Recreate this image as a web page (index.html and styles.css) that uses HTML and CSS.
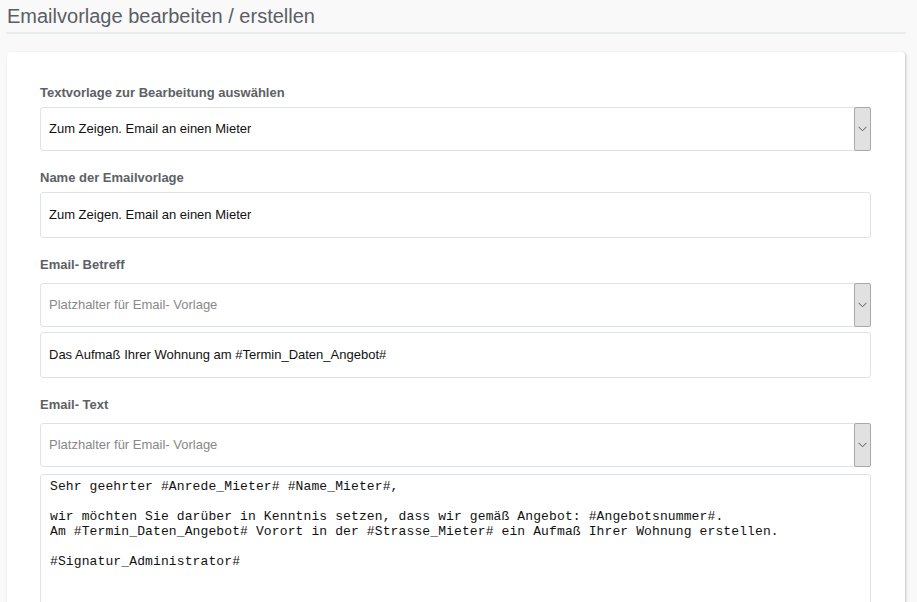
FILE: index.html
```html
<!DOCTYPE html>
<html lang="de">
<head>
<meta charset="utf-8">
<title>Emailvorlage bearbeiten / erstellen</title>
<link rel="stylesheet" href="styles.css">
</head>
<body>
<header class="page-head">
  <h1 class="page-title">Emailvorlage bearbeiten / erstellen</h1>
</header>
<main class="card">
  <label class="lbl">Textvorlage zur Bearbeitung auswählen</label>
  <div class="select">
    <span class="select-text">Zum Zeigen. Email an einen Mieter</span>
    <span class="select-btn"><svg width="9" height="6" viewBox="0 0 9 6"><polyline points="0.5,0.8 4.5,4.8 8.5,0.8" fill="none" stroke="#555" stroke-width="1"/></svg></span>
  </div>

  <label class="lbl lbl-gap">Name der Emailvorlage</label>
  <div class="input">Zum Zeigen. Email an einen Mieter</div>

  <label class="lbl lbl-gap lbl-wide">Email- Betreff</label>
  <div class="select">
    <span class="select-text placeholder">Platzhalter für Email- Vorlage</span>
    <span class="select-btn"><svg width="9" height="6" viewBox="0 0 9 6"><polyline points="0.5,0.8 4.5,4.8 8.5,0.8" fill="none" stroke="#555" stroke-width="1"/></svg></span>
  </div>
  <div class="input input-follow">Das Aufmaß Ihrer Wohnung am #Termin_Daten_Angebot#</div>

  <label class="lbl lbl-gap lbl-wide">Email- Text</label>
  <div class="select">
    <span class="select-text placeholder">Platzhalter für Email- Vorlage</span>
    <span class="select-btn"><svg width="9" height="6" viewBox="0 0 9 6"><polyline points="0.5,0.8 4.5,4.8 8.5,0.8" fill="none" stroke="#555" stroke-width="1"/></svg></span>
  </div>
  <div class="textarea">Sehr geehrter #Anrede_Mieter# #Name_Mieter#,

wir möchten Sie darüber in Kenntnis setzen, dass wir gemäß Angebot: #Angebotsnummer#.
Am #Termin_Daten_Angebot# Vorort in der #Strasse_Mieter# ein Aufmaß Ihrer Wohnung erstellen.

#Signatur_Administrator#</div>
</main>
</body>
</html>
```
FILE: styles.css
```css
html, body {
  margin: 0;
  padding: 0;
}
body {
  background: #f9f9f9;
  font-family: "Liberation Sans", Arial, sans-serif;
  overflow: hidden;
  height: 602px;
}
.page-head {
  margin: 0 11px 0 6px;
  border-bottom: 2px solid #e8ecec;
  height: 32px;
}
.page-title {
  margin: 0;
  padding: 4px 0 0 1px;
  font-size: 20px;
  font-weight: normal;
  line-height: 24px;
  color: #5a5e66;
}
.card {
  margin: 18px 12px 0 7px;
  background: #fff;
  border-radius: 4px;
  box-shadow: 1px 1px 3px rgba(0, 0, 0, 0.22);
  padding: 33px 34px 40px 33px;
}
.lbl {
  display: block;
  font-size: 13px;
  font-weight: bold;
  line-height: 15px;
  color: #5d6166;
  margin-bottom: 7px;
}
.lbl-gap {
  margin-top: 19px;
}
.lbl-wide {
  margin-bottom: 11px;
}
.select, .input {
  border: 1px solid #dde3e6;
  border-radius: 3px;
  font-size: 13px;
  color: #111;
  box-sizing: border-box;
}
.select {
  height: 44px;
  display: flex;
  align-items: stretch;
}
.select-text {
  flex: 1;
  display: flex;
  align-items: center;
  padding-left: 8px;
  padding-bottom: 1px;
}
.placeholder {
  color: #888;
}
.select-btn {
  width: 17px;
  margin: -1px -1px -1px 0;
  border: 1px solid #a9a9a9;
  border-radius: 2px;
  background: #e1e1e1;
  box-sizing: border-box;
  display: flex;
  align-items: center;
  justify-content: center;
}
.input {
  height: 46px;
  display: flex;
  align-items: center;
  padding-left: 8px;
  padding-bottom: 1px;
}
.input-follow {
  margin-top: 5px;
}
.textarea {
  margin-top: 7px;
  border: 1px solid #dde3e6;
  border-radius: 3px;
  height: 200px;
  padding: 4px 9px;
  font-family: "Liberation Mono", "Courier New", monospace;
  font-size: 13px;
  letter-spacing: 0.12px;
  line-height: 15px;
  color: #111;
  white-space: pre;
}
```
